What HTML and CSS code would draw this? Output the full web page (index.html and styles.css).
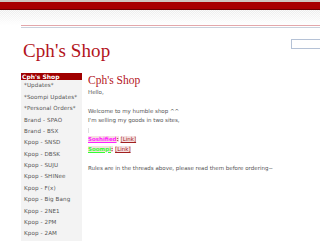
FILE: index.html
```html
<!DOCTYPE html>
<html>
<head>
<meta charset="utf-8">
<link rel="stylesheet" href="styles.css">
</head>
<body>
<div class="topline"></div>
<div class="redbar"></div>
<div class="band"></div>
<div class="page">
  <div class="rules"></div>
  <header class="header">
    <h1 class="site-title">Cph's Shop</h1>
    <input class="search" type="text">
  </header>
  <div class="layout">
    <nav class="sidebar">
      <div class="side-head">Cph's Shop</div>
      <div class="side-item">*Updates*</div>
      <div class="side-item">*Soompi Updates*</div>
      <div class="side-item">*Personal Orders*</div>
      <div class="side-item">Brand - SPAO</div>
      <div class="side-item">Brand - BSX</div>
      <div class="side-item">Kpop - SNSD</div>
      <div class="side-item">Kpop - DBSK</div>
      <div class="side-item">Kpop - SUJU</div>
      <div class="side-item">Kpop - SHINee</div>
      <div class="side-item">Kpop - F(x)</div>
      <div class="side-item">Kpop - Big Bang</div>
      <div class="side-item">Kpop - 2NE1</div>
      <div class="side-item">Kpop - 2PM</div>
      <div class="side-item">Kpop - 2AM</div>
    </nav>
    <main class="main">
      <h2 class="post-title">Cph's Shop</h2>
      <div class="post">
        <p class="line">Hello,</p>
        <p class="line blank"></p>
        <p class="line">Welcome to my humble shop ^^</p>
        <p class="line">I'm selling my goods in two sites,</p>
        <p class="line"><span class="caret"></span></p>
        <p class="line"><a class="site pink">Soshified</a><span class="colon">:</span> <a class="lnk">[Link]</a></p>
        <p class="line"><a class="site green">Soompi</a><span class="colon">:</span> <a class="lnk">[Link]</a></p>
        <p class="line blank"></p>
        <p class="line">Rules are in the threads above, please read them before ordering~</p>
      </div>
    </main>
  </div>
</div>
</body>
</html>
```
FILE: styles.css
```css
html, body {
  margin: 0;
  padding: 0;
  background: #fff;
  overflow: hidden;
}
body {
  width: 320px;
  height: 241px;
  font-family: "DejaVu Sans", Verdana, sans-serif;
}
.topline {
  height: 2px;
  background: #cfc8c0;
}
.redbar {
  height: 7px;
  background: #a80000;
  border-bottom: 1px solid #6a0000;
}
.band {
  height: 15px;
  background:
    linear-gradient(to bottom, rgba(255,255,255,0) 0%, #fff 100%),
    repeating-conic-gradient(#ececec 0 25%, #fafafa 0 50%) 0 0 / 2px 2px;
}
.page {
  margin-left: 21px;
}
.rules {
  height: 1px;
  border-top: 1px solid #e3a7ab;
  border-bottom: 1px solid #c9d0dc;
}
.header {
  display: flex;
  align-items: flex-start;
  justify-content: space-between;
  height: 45px;
}
.site-title {
  margin: 12px 0 0 2px;
  font-family: "Liberation Serif", "Times New Roman", serif;
  font-weight: normal;
  font-size: 19px;
  line-height: 22px;
  color: #b3141c;
  letter-spacing: 0.1px;
}
.search {
  margin: 11px 0 0 0;
  width: 40px;
  height: 10px;
  padding: 0;
  border: 1px solid #b5c2d6;
  box-sizing: border-box;
  flex: none;
  margin-right: -11px;
}
.layout {
  display: flex;
  gap: 6px;
}
.sidebar {
  width: 61px;
  flex: none;
  background: #f3f3f3;
  height: 168px;
}
.side-head {
  background: #a00000;
  color: #fff;
  font-weight: bold;
  font-size: 6px;
  height: 7.4px;
  line-height: 7.4px;
  padding-left: 1px;
  white-space: nowrap;
}
.side-item {
  height: 11.38px;
  line-height: 11.38px;
  font-size: 5.6px;
  color: #555;
  padding-left: 3px;
  white-space: nowrap;
  letter-spacing: 0.1px;
}
.main {
  flex: 1;
}
.post-title {
  margin: 0;
  padding-top: 1px;
  font-family: "Liberation Serif", "Times New Roman", serif;
  font-weight: normal;
  font-size: 11.5px;
  line-height: 13px;
  color: #b3141c;
}
.post {
  margin-top: 1px;
  font-size: 5.5px;
  color: #555;
}
.line {
  margin: 0;
  height: 9.45px;
  line-height: 9.45px;
  white-space: nowrap;
}
.caret {
  display: inline-block;
  width: 1px;
  height: 5px;
  background: #ddd;
  vertical-align: middle;
}
.site {
  font-weight: bold;
  text-decoration: underline;
}
.pink { color: #ff20ff; background: #f6e0e0; }
.green { color: #33ff33; background: #f6e0e0; }
.colon { color: #a03030; font-weight: bold; background: #f6e0e0; }
.lnk {
  color: #a02020;
  text-decoration: underline;
  background: #f6e0e0;
}
```
